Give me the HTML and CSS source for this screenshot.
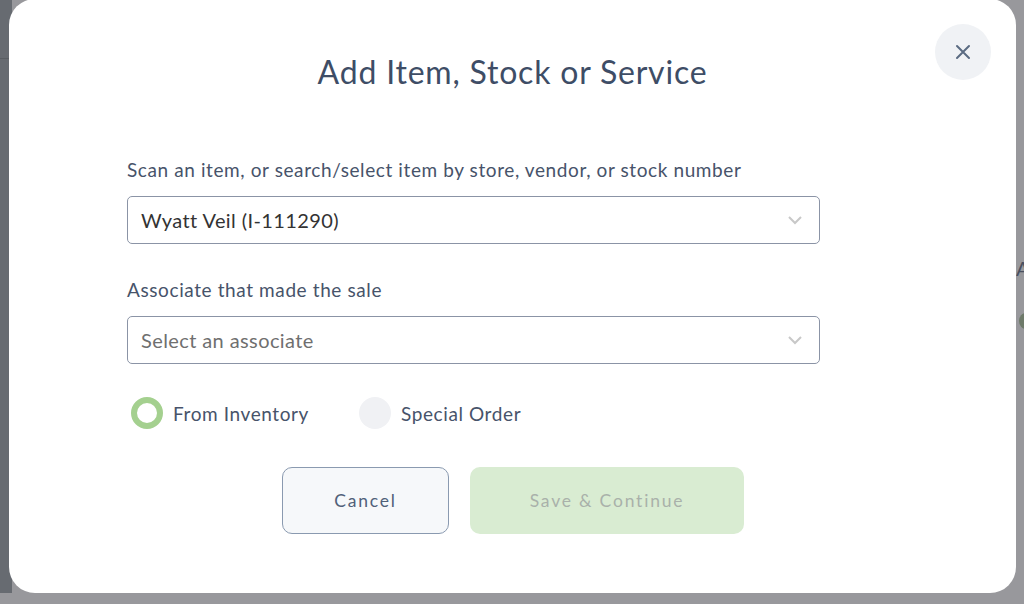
FILE: index.html
```html
<!DOCTYPE html>
<html>
<head>
<meta charset="utf-8">
<link rel="stylesheet" href="styles.css">
</head>
<body>
<div class="backdrop">
  <div class="sidebar"><div class="sideline"></div></div>
  <div class="modal">
    <button class="close" aria-label="Close">
      <svg width="16" height="16" viewBox="0 0 16 16"><path d="M2 2 L14 14 M14 2 L2 14" stroke="#5b6b82" stroke-width="2" stroke-linecap="round"/></svg>
    </button>
    <h1 class="title">Add Item, Stock or Service</h1>
    <div class="form">
      <label class="label">Scan an item, or search/select item by store, vendor, or stock number</label>
      <div class="select">
        <span class="value">Wyatt Veil (I-111290)</span>
        <svg class="chev" width="16" height="10" viewBox="0 0 16 10"><path d="M2 2 L8 8 L14 2" fill="none" stroke="#c8c8c8" stroke-width="2"/></svg>
      </div>
      <label class="label second">Associate that made the sale</label>
      <div class="select">
        <span class="placeholder">Select an associate</span>
        <svg class="chev" width="16" height="10" viewBox="0 0 16 10"><path d="M2 2 L8 8 L14 2" fill="none" stroke="#c8c8c8" stroke-width="2"/></svg>
      </div>
      <div class="radios">
        <div class="radio"><span class="dot on"></span><span>From Inventory</span></div>
        <div class="radio"><span class="dot"></span><span>Special Order</span></div>
      </div>
      <div class="buttons">
        <button class="btn cancel">Cancel</button>
        <button class="btn save">Save &amp; Continue</button>
      </div>
    </div>
  </div>
  <div class="rightpeek"><span class="peekA">A</span><span class="peekIcon"></span></div>
</div>
</body>
</html>
```

FILE: styles.css
```css
* { box-sizing: border-box; }
html, body { margin: 0; padding: 0; }
body {
  width: 1024px;
  height: 604px;
  overflow: hidden;
  font-family: Lato, "Noto Sans", sans-serif;
  background: #98989c;
}
.backdrop {
  position: relative;
  width: 1024px;
  height: 604px;
  background: #98989c;
}
.sidebar {
  position: absolute;
  left: 0; top: 0;
  width: 12px; height: 593px;
  background: #676b71;
}
.sideline {
  margin-top: 58px;
  height: 1px;
  background: #5a5e63;
}
.rightpeek {
  position: absolute;
  left: 1016px; top: 0;
  width: 8px; height: 593px;
  overflow: hidden;
}
.peekA {
  position: absolute;
  left: 0; top: 256px;
  font-size: 20px;
  line-height: 24px;
  color: #4a5060;
}
.peekIcon {
  position: absolute;
  left: 3px; top: 313px;
  width: 14px; height: 16px;
  border-radius: 50%;
  background: #6e7a6a;
}
.modal {
  position: absolute;
  left: 9px; top: -1px;
  width: 1007px;
  height: 594px;
  background: #fff;
  border-radius: 26px;
  display: flex;
  flex-direction: column;
  align-items: center;
}
.close {
  position: absolute;
  right: 25px; top: 25px;
  width: 56px; height: 56px;
  border-radius: 50%;
  border: none;
  background: #f0f2f5;
  display: flex;
  align-items: center;
  justify-content: center;
  padding: 0;
}
.title {
  margin: 53px 0 0;
  font-size: 32px;
  font-weight: 400;
  color: #3e4d66;
  letter-spacing: 0.8px;
  line-height: 40px;
}
.form {
  margin-top: 66px;
  width: 693px;
  align-self: flex-start;
  margin-left: 118px;
  display: flex;
  flex-direction: column;
}
.label {
  font-size: 19px;
  letter-spacing: 0.6px;
  color: #47536a;
  line-height: 24px;
}
.label.second { margin-top: 34px; }
.select {
  margin-top: 14px;
  height: 48px;
  border: 1px solid #8b94a6;
  border-radius: 5px;
  display: flex;
  align-items: center;
  justify-content: space-between;
  padding: 0 16px 0 13px;
  font-size: 20px;
  letter-spacing: 0.4px;
}
.value { color: #333; }
.placeholder { color: #6f6f6f; }
.radios {
  margin-top: 33px;
  display: flex;
  align-items: center;
  gap: 50px;
  padding-left: 4px;
  font-size: 19px;
  letter-spacing: 0.6px;
  color: #47536a;
}
.radio {
  display: flex;
  align-items: center;
  gap: 10px;
}
.dot {
  width: 32px; height: 32px;
  border-radius: 50%;
  background: #f0f1f4;
}
.dot.on {
  background: #fff;
  border: 6px solid #a4d08f;
}
.buttons {
  margin-top: 38px;
  display: flex;
  gap: 21px;
  padding-left: 155px;
}
.btn {
  height: 67px;
  border-radius: 10px;
  font-family: Lato, "Noto Sans", sans-serif;
  font-size: 17.5px;
  letter-spacing: 1.8px;
}
.cancel {
  width: 167px;
  background: #f6f8fa;
  border: 1px solid #8a9ab0;
  color: #506079;
}
.save {
  width: 274px;
  background: #d9ecd2;
  border: none;
  color: #a9b1aa;
}
```
